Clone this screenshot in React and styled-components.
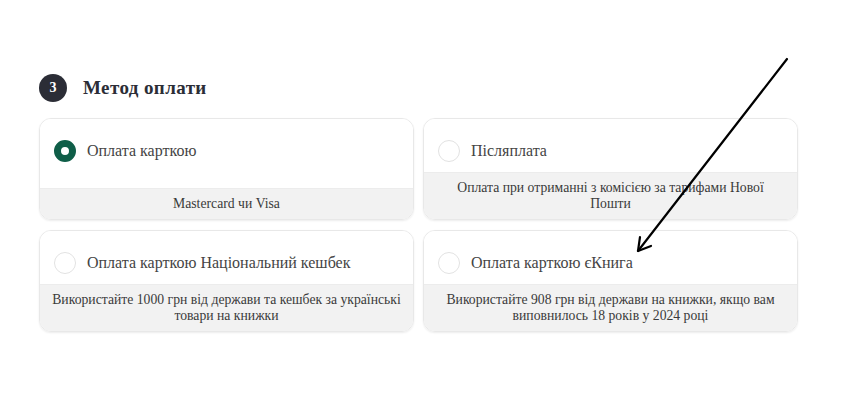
import React from "react";
import styled, { createGlobalStyle } from "styled-components";

const GlobalStyle = createGlobalStyle`
  html, body {
    margin: 0;
    padding: 0;
    background: #fff;
  }
  body {
    font-family: "Liberation Serif", "DejaVu Serif", serif;
    color: #333;
  }
`;

const methods = [
  {
    id: "card",
    title: "Оплата карткою",
    note: "Mastercard чи Visa",
    selected: true,
  },
  {
    id: "cod",
    title: "Післяплата",
    note: "Оплата при отриманні з комісією за тарифами Нової\nПошти",
  },
  {
    id: "cashback",
    title: "Оплата карткою Національний кешбек",
    note: "Використайте 1000 грн від держави та кешбек за українські товари на книжки",
  },
  {
    id: "eknyha",
    title: "Оплата карткою єКнига",
    note: "Використайте 908 грн від держави на книжки, якщо вам виповнилось 18 років у 2024 році",
  },
];

const App = () => {
  return (
    <>
      <GlobalStyle />
      <Page>
        <Section>
          <Header>
            <Step>3</Step>
            <Title>Метод оплати</Title>
          </Header>
          <Grid>
            {methods.map((m) => (
              <Card key={m.id}>
                <CardTop>
                  <Radio $checked={m.selected} />
                  <CardTitle>{m.title}</CardTitle>
                </CardTop>
                <CardNote>{m.note}</CardNote>
              </Card>
            ))}
          </Grid>
        </Section>
        <Arrow width="856" height="400" viewBox="0 0 856 400">
          <path
            d="M787 59 L638 251"
            stroke="#000"
            strokeWidth="2.2"
            strokeLinecap="round"
            fill="none"
          />
          <path
            d="M640 237 L638 251 L651 246"
            stroke="#000"
            strokeWidth="2.2"
            strokeLinecap="round"
            strokeLinejoin="round"
            fill="none"
          />
        </Arrow>
      </Page>
    </>
  );
};

const Page = styled.div`
  position: relative;
  width: 856px;
  height: 400px;
  padding: 74px 0 0 39px;
  box-sizing: border-box;
  overflow: hidden;
`;

const Section = styled.section`
  width: 759px;
`;

const Header = styled.div`
  display: flex;
  align-items: center;
  gap: 16px;
  height: 28px;
  margin-bottom: 16px;
`;

const Step = styled.div`
  width: 28px;
  height: 28px;
  border-radius: 50%;
  background: #2b2d36;
  color: #fff;
  font-size: 14px;
  font-weight: 700;
  display: flex;
  align-items: center;
  justify-content: center;
`;

const Title = styled.h2`
  margin: 0;
  font-size: 19px;
  letter-spacing: 0.4px;
  font-weight: 700;
  color: #2b2d36;
`;

const Grid = styled.div`
  display: grid;
  grid-template-columns: 1fr 1fr;
  gap: 10px 9px;
`;

const Card = styled.div`
  display: flex;
  flex-direction: column;
  min-height: 102px;
  border: 1px solid #e8e8e8;
  border-radius: 12px;
  overflow: hidden;
  box-shadow: 0 1px 2px rgba(0, 0, 0, 0.08);
  box-sizing: border-box;
`;

const CardTop = styled.div`
  flex: 1;
  display: flex;
  align-items: flex-start;
  gap: 11px;
  padding: 21px 14px 10px;
  background: #fff;
`;

const Radio = styled.span`
  flex: none;
  width: 22px;
  height: 22px;
  border-radius: 50%;
  box-sizing: border-box;
  border: ${(p) => (p.$checked ? "7.5px solid #0f5e48" : "1px solid #e2e2e2")};
  background: #fff;
`;

const CardTitle = styled.span`
  font-size: 16px;
  line-height: 22px;
  color: #444;
`;

const CardNote = styled.div`
  background: #f2f2f2;
  border-top: 1px solid #ececec;
  padding: 7px 8px 7px;
  text-align: center;
  white-space: pre-line;
  font-size: 13.7px;
  line-height: 16px;
  color: #3a3a3a;
`;

const Arrow = styled.svg`
  position: absolute;
  left: 0;
  top: 0;
  pointer-events: none;
`;

export default App;
